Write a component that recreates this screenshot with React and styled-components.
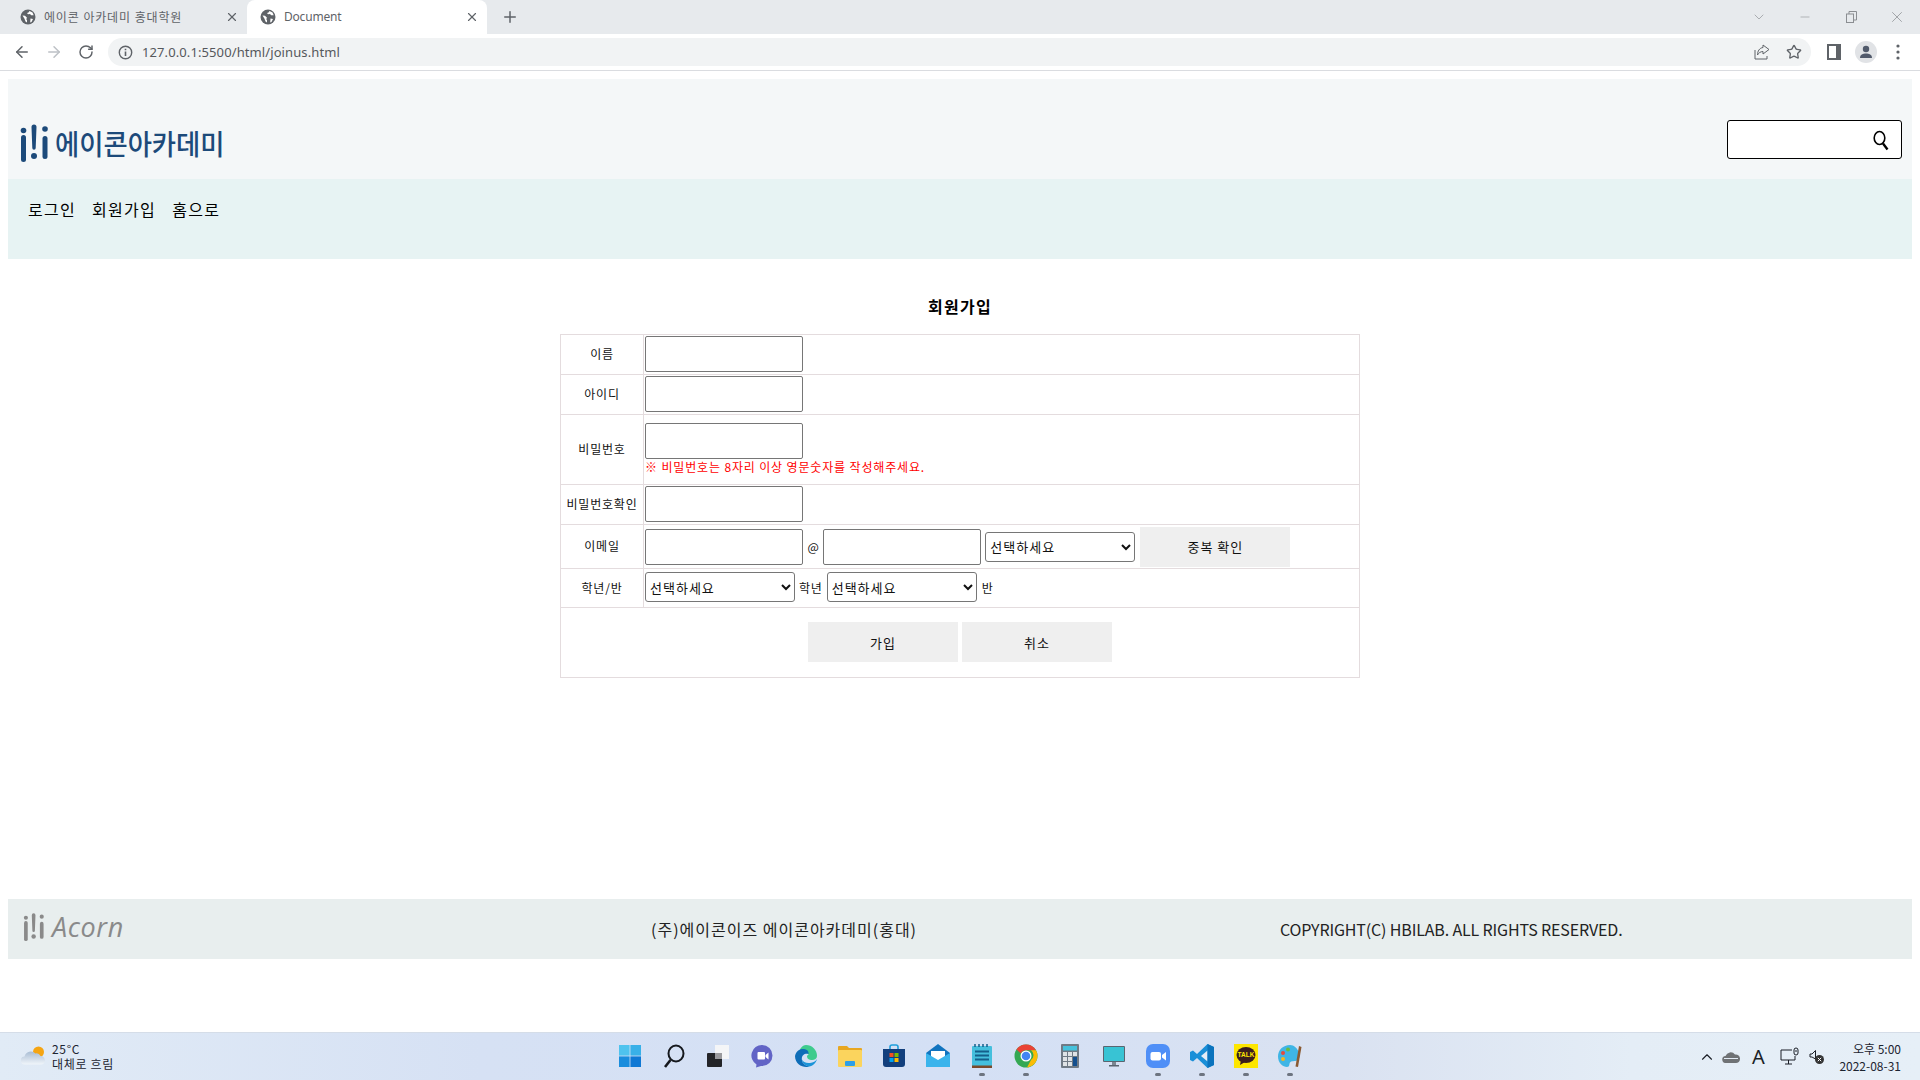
import React from 'react';
import styled, { createGlobalStyle } from 'styled-components';
import { ArrowLeft, ArrowRight, RotateCw, Star, X, Plus, ChevronDown, Minus, ChevronUp } from 'lucide-react';

const FONT = '"Noto Sans CJK KR", "Noto Sans", sans-serif';

const GlobalStyle = createGlobalStyle`
  html, body {
    margin: 0;
    padding: 0;
    height: 100%;
    background: #fff;
    overflow: hidden;
  }
  body {
    font-family: ${FONT};
    color: #000;
  }
`;

const Screen = styled.div`
  width: 1920px;
  height: 1080px;
  display: flex;
  flex-direction: column;
`;

/* browser chrome */
const TabStrip = styled.div`
  height: 34px;
  background: #e7eaed;
  display: flex;
  align-items: flex-end;
  padding-left: 7px;
`;

const Tab = styled.div`
  width: 240px;
  height: 34px;
  box-sizing: border-box;
  display: flex;
  align-items: center;
  gap: 8px;
  padding: 0 8px 1px 13px;
  background: ${(p) => (p.$active ? '#fff' : 'transparent')};
  border-radius: 8px 8px 0 0;
  font: 12px "Noto Sans", "Noto Sans CJK KR", sans-serif;
  color: #5f6368;
`;

const TabTitle = styled.span`
  flex: 1;
  white-space: nowrap;
  overflow: hidden;
  letter-spacing: ${(p) => (p.$ko ? '0.8px' : '-0.2px')};
`;

const NewTab = styled.div`
  margin-left: 14px;
  height: 34px;
  display: flex;
  align-items: center;
  color: #5f6368;
`;

const WindowControls = styled.div`
  margin-left: auto;
  display: flex;
  height: 34px;
`;

const WindowButton = styled.div`
  width: 46px;
  display: flex;
  align-items: center;
  justify-content: center;
  color: #8b8e92;
`;

const Toolbar = styled.div`
  height: 37px;
  box-sizing: border-box;
  background: #fff;
  border-bottom: 1px solid #dadce0;
  display: flex;
  align-items: center;
  padding: 0 6px;
`;

const ToolButton = styled.div`
  width: 32px;
  height: 28px;
  display: flex;
  align-items: center;
  justify-content: center;
  color: ${(p) => (p.$disabled ? '#bdc1c6' : '#5f6368')};
`;

const Omnibox = styled.div`
  flex: 1;
  height: 28px;
  margin: 0 7px 0 6px;
  border-radius: 14px;
  background: #f1f3f4;
  display: flex;
  align-items: center;
  padding: 0 1px 0 10px;
`;

const Url = styled.span`
  flex: 1;
  margin-left: 9px;
  font: 13px "Noto Sans", sans-serif;
  letter-spacing: 0.1px;
  color: #55585c;
`;

const OmniIcon = styled.div`
  width: 32px;
  display: flex;
  justify-content: center;
  color: #5f6368;
`;

/* page */
const Page = styled.div`
  flex: 1;
  min-height: 0;
  display: flex;
  flex-direction: column;
  padding: 8px 8px 73px;
`;

const Header = styled.header`
  height: 100px;
  box-sizing: border-box;
  background: #f4f7f8;
  display: flex;
  justify-content: space-between;
  padding: 41px 10px 0 12px;
`;

const Logo = styled.div`
  display: flex;
  align-items: center;
  gap: 6px;
  height: 38px;
  margin-top: 4px;
`;

const LogoText = styled.span`
  display: inline-block;
  font-size: 28px;
  font-weight: 500;
  line-height: 38px;
  color: #1c4a7a;
  transform: scaleX(0.94);
  transform-origin: left center;
  white-space: nowrap;
`;

const SearchBox = styled.div`
  width: 175px;
  height: 39px;
  box-sizing: border-box;
  border: 1px solid #000;
  border-radius: 3px;
  background: #fff;
  display: flex;
  align-items: center;
  padding: 2px 12px 0 0;
`;

const SearchInput = styled.input`
  flex: 1;
  min-width: 0;
  border: 0;
  outline: 0;
  background: transparent;
`;

const Nav = styled.nav`
  height: 80px;
  box-sizing: border-box;
  background: #e7f3f3;
  display: flex;
  align-items: flex-start;
  gap: 16px;
  padding: 19px 20px 0;
  font-size: 16px;
  line-height: 22px;
  letter-spacing: 1.3px;
`;

const Title = styled.h2`
  margin: 36px 0 16px;
  text-align: center;
  font-size: 16px;
  line-height: 23px;
  font-weight: 700;
  letter-spacing: 1.3px;
`;

const JoinTable = styled.table`
  width: 800px;
  margin: 0 auto;
  table-layout: fixed;
  border-collapse: collapse;
  font-size: 12px;
`;

const Row = styled.tr`
  height: ${(p) => p.$h}px;
`;

const Label = styled.td`
  width: 83px;
  box-sizing: border-box;
  padding: 0 0 2px;
  border: 1px solid #e4dcde;
  text-align: center;
  vertical-align: middle;
  letter-spacing: 0.8px;
  color: #111;
`;

const Field = styled.td`
  padding: 0 0 ${(p) => p.$pb ?? 2}px 1px;
  border: 1px solid #e4dcde;
  vertical-align: middle;
`;

const FieldStack = styled.div`
  display: flex;
  flex-direction: column;
  align-items: flex-start;
  padding-top: 1px;
`;

const FieldRow = styled.div`
  display: flex;
  align-items: center;
`;

const TextInput = styled.input`
  width: 158px;
  height: 36px;
  box-sizing: border-box;
  border: 1px solid #767676;
  border-radius: 2px;
  background: #fff;
  padding: 0 2px;
`;

const Note = styled.span`
  font-size: 12px;
  line-height: 16px;
  letter-spacing: 0.85px;
  color: #ff0000;
`;

const Between = styled.span`
  margin: 0 ${(p) => p.$gap || 4}px;
  font-size: 12px;
  letter-spacing: ${(p) => (p.$tight ? 0 : 0.8)}px;
  color: #111;
`;

const Picker = styled.select`
  width: 150px;
  height: 30px;
  box-sizing: border-box;
  margin-left: ${(p) => p.$ml || 0}px;
  border: 1px solid #767676;
  border-radius: 3px;
  background: #fff;
  font: 13px ${FONT};
  letter-spacing: 1px;
  color: #111;
`;

const GreyButton = styled.button`
  width: 150px;
  height: 40px;
  border: 0;
  padding: 0;
  margin-left: ${(p) => p.$ml || 0}px;
  background: #efefef;
  font: 13px ${FONT};
  letter-spacing: 1px;
  color: #111;
`;

const Actions = styled.td`
  padding: 0 0 1px;
  border: 1px solid #e4dcde;
  text-align: center;
`;

const ActionRow = styled.div`
  display: flex;
  justify-content: center;
  gap: 4px;
`;

/* footer */
const Footer = styled.footer`
  margin-top: auto;
  height: 60px;
  background: #e8eeee;
  display: grid;
  grid-template-columns: 643px 629px 1fr;
  align-items: center;
  font-size: 16px;
`;

const FootLogo = styled.div`
  display: flex;
  align-items: center;
  gap: 7px;
  padding: 0 0 5px 15px;
  color: #8a8a8a;
`;

const FootWord = styled.span`
  font: italic 27px "Open Sans", sans-serif;
  line-height: 32px;
  letter-spacing: 0.6px;
`;

const FootText = styled.span`
  color: #222;
  white-space: nowrap;
  line-height: 20px;
  letter-spacing: ${(p) => (p.$ko ? '1px' : '-0.15px')};
`;

/* taskbar */
const Taskbar = styled.div`
  height: 48px;
  box-sizing: border-box;
  border-top: 1px solid #d5dde8;
  background: linear-gradient(90deg, #e1ebf6 0%, #d6e1f4 25%, #d4e0f5 50%, #dae2f1 70%, #e4edf6 85%, #e6eff7 100%);
  display: grid;
  grid-template-columns: 1fr auto 1fr;
  align-items: center;
`;

const Weather = styled.div`
  display: flex;
  align-items: center;
  gap: 7px;
  padding: 0 0 2px 21px;
  font-size: 12px;
  line-height: 15px;
`;

const WeatherText = styled.div`
  letter-spacing: 0.7px;
  color: #1c2430;
`;

const AppRow = styled.div`
  display: flex;
`;

const AppSlot = styled.div`
  position: relative;
  width: 44px;
  height: 47px;
  box-sizing: border-box;
  padding-bottom: 2px;
  display: flex;
  align-items: center;
  justify-content: center;
`;

const RunDot = styled.span`
  position: absolute;
  left: 19px;
  bottom: 4px;
  width: 6px;
  height: 3px;
  border-radius: 2px;
  background: #6d7480;
`;

const Tray = styled.div`
  justify-self: end;
  display: flex;
  align-items: center;
  padding-right: 19px;
  color: #1b1f27;
`;

const TrayIcon = styled.div`
  width: ${(p) => p.$w}px;
  display: flex;
  justify-content: center;
`;

const TrayLetter = styled.span`
  font: 20px "Noto Sans", sans-serif;
  line-height: 24px;
`;

const Clock = styled.div`
  margin-left: 14px;
  text-align: right;
  font-size: 12px;
  line-height: 17px;
  color: #1c2430;
`;

const Favicon = () => (
  <svg width="16" height="16" viewBox="0 0 16 16">
    <circle cx="8" cy="8" r="7.5" fill="#5f6368" />
    <path d="M2.500 6.500l2.500.3 2 2-.8 1.400.8.8v2.500l-1.500-1-1-2.800zM9.500 2l-1 1.500-1.500.6 1 1.200 2-.4 1.200 1.300h2.500L12.500 3.500zM10.500 9.500l2.500.4-1.500 3-1.300.5z" fill="#fff" />
  </svg>
);

const LogoMark = ({ color, w, h }) => (
  <svg width={w} height={h} viewBox="0 0 29 38" fill={color}>
    <circle cx="3.5" cy="6.5" r="2.8" />
    <rect x="1" y="11" width="5" height="27" rx="2.5" />
    <path d="M11.5 3a2.5 2.5 0 0 1 5 0l-.8 21a1.7 1.7 0 0 1-3.4 0z" />
    <circle cx="14" cy="32" r="3" />
    <circle cx="25" cy="5" r="2.8" />
    <rect x="22.5" y="12" width="5" height="23" rx="2.5" />
  </svg>
);

const MagnifierIcon = () => (
  <svg width="16" height="21" viewBox="0 0 16 21" fill="none" stroke="#000">
    <ellipse cx="6.5" cy="8" rx="5.3" ry="6.5" strokeWidth="1.6" />
    <path d="M10 13.500l4.500 6" strokeWidth="2.4" />
  </svg>
);

const InfoIcon = () => (
  <svg width="15" height="15" viewBox="0 0 15 15" fill="none" stroke="#5f6368" strokeWidth="1.4">
    <circle cx="7.5" cy="7.5" r="6.2" />
    <path d="M7.500 6.500v4.500M7.500 3.800v1.500" strokeWidth="1.6" />
  </svg>
);

const ShareIcon = () => (
  <svg width="16" height="16" viewBox="0 0 16 16" fill="none" stroke="#5f6368" strokeWidth="1">
    <path d="M1 6v9h12v-3" />
    <path d="M9 1l6 4.500L9 10V7.500C6.500 7.500 4.500 9 3.500 11c0-4 2-7 5.500-7.500z" />
  </svg>
);

const PanelIcon = () => (
  <svg width="14" height="16" viewBox="0 0 14 16">
    <rect width="14" height="16" fill="#5f6368" />
    <rect x="2" y="2" width="7" height="12" fill="#fff" />
  </svg>
);

const AvatarIcon = () => (
  <svg width="22" height="22" viewBox="0 0 22 22">
    <circle cx="11" cy="11" r="11" fill="#e1e3e6" />
    <circle cx="11" cy="8" r="3.2" fill="#515a6b" />
    <path d="M5 17c0-3.500 3-4.500 6-4.500s6 1 6 4.500z" fill="#515a6b" />
  </svg>
);

const DotsIcon = () => (
  <svg width="4" height="16" viewBox="0 0 4 16" fill="#5f6368">
    <circle cx="2" cy="2" r="1.6" />
    <circle cx="2" cy="8" r="1.6" />
    <circle cx="2" cy="14" r="1.6" />
  </svg>
);

const RestoreIcon = () => (
  <svg width="11" height="12" viewBox="0 0 11 12" fill="none" stroke="#8b8e92">
    <rect x="0.5" y="3" width="7" height="8.5" />
    <path d="M3 3V.5h7.500V9H8" />
  </svg>
);

const WeatherIcon = () => (
  <svg width="24" height="20" viewBox="0 0 24 20">
    <defs>
      <linearGradient id="cloudFill" x1="0" y1="0" x2="0" y2="1">
        <stop offset="0" stopColor="#a9bdd4" />
        <stop offset="1" stopColor="#f0f5fa" />
      </linearGradient>
    </defs>
    <circle cx="17.500" cy="6" r="5.500" fill="#f5a513" />
    <path d="M4 18.500a4 4 0 0 1-.5-8 6.500 6.500 0 0 1 11-3A4.500 4.500 0 0 1 19.500 10c2.500 0 4.500 2 4.500 4.500s-2 4-4 4z" fill="url(#cloudFill)" />
  </svg>
);

const apps = [
  {
    name: 'start',
    art: (
      <g>
        <rect x="1" y="1" width="10.6" height="10.6" fill="#4fc3ee" />
        <rect x="12.4" y="1" width="10.6" height="10.6" fill="#39b0e8" />
        <rect x="1" y="12.4" width="10.6" height="10.6" fill="#1a8ddd" />
        <rect x="12.4" y="12.4" width="10.6" height="10.6" fill="#0f78d4" />
      </g>
    ),
  },
  {
    name: 'search',
    art: (
      <g fill="none" stroke="#15181d">
        <ellipse cx="14" cy="9.5" rx="7.5" ry="8" strokeWidth="2" />
        <path d="M8.500 16L3 23" strokeWidth="2.6" />
      </g>
    ),
  },
  {
    name: 'taskview',
    art: (
      <g>
        <rect x="9" y="1" width="14" height="14" fill="#f4f5f7" />
        <rect x="1" y="9" width="15" height="14" rx="1" fill="#232428" />
        <rect x="9" y="9" width="7" height="6" fill="#9a9a9e" />
      </g>
    ),
  },
  {
    name: 'chat',
    art: (
      <g>
        <path d="M12 1a10.500 10.500 0 0 1 0 21h-1l-5 1.500.5-3A10.500 10.500 0 0 1 12 1z" fill="#6264c6" />
        <rect x="7.5" y="8" width="7.5" height="7.5" rx="1" fill="#fff" />
        <path d="M15.500 11l3-2.500v7l-3-2.500z" fill="#fff" />
      </g>
    ),
  },
  {
    name: 'edge',
    art: (
      <g>
        <path d="M12 1a11 11 0 0 1 11 11c0 3-3 4.500-6 4-3-.5-4-2-4-3.500 0-1 1-1.500 1.500-2C13 7 8 6 4.500 9 5 6 8 1 12 1z" fill="#3ecb8e" />
        <path d="M1 12C2 7 6 4.500 10 5c3 .3 5 2 4.500 5C10 9 7 12 8 16.500c.5 2.500 3 5.500 7.500 6C10 24.500 1 21 1 12z" fill="#0e6db8" />
        <path d="M23 15c-1 4-4 7-8 7.500-3.500-.5-7-3-7-7 1 2.500 4 4 8 3.500 3-.3 6-2 7-4z" fill="#1c94d8" />
      </g>
    ),
  },
  {
    name: 'files',
    art: (
      <g>
        <path d="M0 3a1 1 0 0 1 1-1h8l2 2h12a1 1 0 0 1 1 1v3H0z" fill="#e8a721" />
        <rect y="6" width="24" height="17" rx="1" fill="#fbd45d" />
        <rect x="7" y="17" width="10" height="5" rx="1" fill="#2f9fe6" />
      </g>
    ),
  },
  {
    name: 'store',
    art: (
      <g>
        <path d="M8 5V3a2 2 0 0 1 2-2h4a2 2 0 0 1 2 2v2" fill="none" stroke="#1f9fdb" strokeWidth="1.6" />
        <path d="M1 5h22v15a3 3 0 0 1-3 3H4a3 3 0 0 1-3-3z" fill="#123f7d" />
        <rect x="7.5" y="9" width="4" height="4" fill="#f25022" />
        <rect x="12.5" y="9" width="4" height="4" fill="#7fba00" />
        <rect x="7.5" y="14" width="4" height="4" fill="#00a4ef" />
        <rect x="12.5" y="14" width="4" height="4" fill="#ffb900" />
      </g>
    ),
  },
  {
    name: 'mail',
    art: (
      <g>
        <path d="M12 0l12 9v14H0V9z" fill="#1174bf" />
        <path d="M5 7h14v7l-7 4-7-4z" fill="#fff" />
        <path d="M0 9l12 7 12-7v14H0z" fill="#3ab4ec" />
      </g>
    ),
  },
  {
    name: 'notepad',
    dot: true,
    art: (
      <g>
        <rect x="2" y="2" width="20" height="22" rx="1" fill="#45bfdd" />
        <rect x="2" y="21.5" width="20" height="2.5" fill="#7b4a2b" />
        <path d="M5 7.500h14M5 11.500h14M5 15.500h14" stroke="#155f8a" strokeWidth="1.8" />
        <path d="M5 0v3M9 0v3M13 0v3M17 0v3" stroke="#155f8a" strokeWidth="1.5" />
      </g>
    ),
  },
  {
    name: 'chrome',
    dot: true,
    art: (
      <g>
        <circle cx="12" cy="12" r="11.5" fill="#34a853" />
        <path d="M12 .5a11.500 11.500 0 0 1 10 5.800H12a5.800 5.800 0 0 0-5.200 3.200L2.500 5.500A11.500 11.500 0 0 1 12 .5z" fill="#ea4335" />
        <path d="M22 6.300a11.500 11.500 0 0 1-9 17.100l4-7.500a5.800 5.800 0 0 0 0-9.600z" fill="#fbbc04" />
        <circle cx="12" cy="12" r="5.5" fill="#fff" />
        <circle cx="12" cy="12" r="4.3" fill="#4285f4" />
      </g>
    ),
  },
  {
    name: 'calc',
    art: (
      <g>
        <rect x="3" y="0" width="18" height="24" rx="1" fill="#6f7a85" />
        <rect x="5" y="2" width="14" height="4.5" fill="#45c1dc" />
        <path d="M5 8h4v4H5zM10 8h4v4h-4zM15 8h4v4h-4zM5 13h4v4H5zM10 13h4v4h-4zM5 18h4v4H5zM10 18h4v4h-4z" fill="#dfe3e6" />
        <rect x="15" y="13" width="4" height="9" fill="#134f8e" />
      </g>
    ),
  },
  {
    name: 'display',
    art: (
      <g>
        <rect x="1" y="2" width="22" height="16" rx="1" fill="#5a6570" />
        <rect x="2" y="3" width="20" height="14" fill="#38c3d4" />
        <path d="M10 18h4v3h-4z" fill="#7c8791" />
        <rect x="7" y="21" width="10" height="1.5" fill="#5a6570" />
      </g>
    ),
  },
  {
    name: 'zoom',
    dot: true,
    art: (
      <g>
        <rect x="0" y="0" width="24" height="24" rx="7" fill="#4f8ff7" />
        <rect x="4.5" y="8" width="10.5" height="8.5" rx="2" fill="#fff" />
        <path d="M16 11l4-3v8.500l-4-3z" fill="#fff" />
      </g>
    ),
  },
  {
    name: 'vscode',
    dot: true,
    art: (
      <g>
        <path d="M17.500 0L24 3v18l-6.500 3L7 14l-4 3.500-3-1.500v-8l3-1.500L7 10z" fill="#1a8fd8" />
        <path d="M17.500 6.500L11 12l6.500 5.500z" fill="#e4ecf6" />
        <path d="M17.500 0L24 3v18l-6.500 3z" fill="#0b73bd" />
      </g>
    ),
  },
  {
    name: 'kakao',
    dot: true,
    art: (
      <g>
        <rect width="24" height="24" fill="#fde600" />
        <ellipse cx="12" cy="11" rx="9.5" ry="8" fill="#3a1d1d" />
        <path d="M7 16l-1 5 5-3z" fill="#3a1d1d" />
        <text x="12" y="13" textAnchor="middle" fontSize="6.5" fontWeight="700" fill="#fde600" fontFamily="Liberation Sans, sans-serif">TALK</text>
      </g>
    ),
  },
  {
    name: 'paint',
    dot: true,
    art: (
      <g>
        <path d="M12 1C5 1 0 6 0 12.500 0 19 5 23 9 23c3 0 2-3 3-4.500 1-2 5-1 7-2 3-2 3-5 2-8-1.500-4-5-7.500-9-7.500z" fill="#3fb5e5" />
        <circle cx="5" cy="9" r="2" fill="#e44b3c" />
        <circle cx="10" cy="5.5" r="2" fill="#6cbb3c" />
        <circle cx="5" cy="15" r="2" fill="#f3b61f" />
        <path d="M21 2l2.500 1-3.500 20-2.500-.5z" fill="#8a5a32" />
      </g>
    ),
  },
];

const OnedriveIcon = () => (
  <svg width="18" height="12" viewBox="0 0 18 12">
    <path d="M4 12a3.500 3.500 0 0 1-.5-7A5.500 5.500 0 0 1 13 3.500 4.300 4.300 0 0 1 18 8c0 2.500-2 4-4 4z" fill="#6f7275" />
    <path d="M2 7.500h14" stroke="#e2ebf5" strokeWidth="1" />
  </svg>
);

const NetworkIcon = () => (
  <svg width="20" height="19" viewBox="0 0 20 19" fill="none" stroke="#1b1f27" strokeWidth="1">
    <path d="M12 3H1v10h14V9" />
    <path d="M5 17h7M8.500 13v4" />
    <rect x="14" y="1" width="4" height="7" rx="2" />
    <path d="M16 3v2" />
  </svg>
);

const SpeakerIcon = () => (
  <svg width="15" height="15" viewBox="0 0 15 15" fill="none" stroke="#1b1f27" strokeWidth="1">
    <path d="M1 5h2l3.500-3.500V10L3 8H1z" />
    <circle cx="10.5" cy="10.5" r="4.5" fill="#333" stroke="none" />
    <path d="M8.800 8.800l3.400 3.400M12.200 8.800l-3.400 3.400" stroke="#fff" />
  </svg>
);

const BrowserChrome = () => (
  <>
    <TabStrip>
      <Tab>
        <Favicon />
        <TabTitle $ko>에이콘 아카데미 홍대학원</TabTitle>
        <X size={14} strokeWidth={2} />
      </Tab>
      <Tab $active>
        <Favicon />
        <TabTitle>Document</TabTitle>
        <X size={14} strokeWidth={2} />
      </Tab>
      <NewTab>
        <Plus size={18} strokeWidth={2} />
      </NewTab>
      <WindowControls>
        <WindowButton>
          <ChevronDown size={16} strokeWidth={1} />
        </WindowButton>
        <WindowButton>
          <Minus size={14} strokeWidth={1} />
        </WindowButton>
        <WindowButton>
          <RestoreIcon />
        </WindowButton>
        <WindowButton>
          <X size={18} strokeWidth={1} />
        </WindowButton>
      </WindowControls>
    </TabStrip>
    <Toolbar>
      <ToolButton>
        <ArrowLeft size={18} strokeWidth={2} />
      </ToolButton>
      <ToolButton $disabled>
        <ArrowRight size={18} strokeWidth={2} />
      </ToolButton>
      <ToolButton>
        <RotateCw size={16} strokeWidth={2.2} />
      </ToolButton>
      <Omnibox>
        <InfoIcon />
        <Url>127.0.0.1:5500/html/joinus.html</Url>
        <OmniIcon>
          <ShareIcon />
        </OmniIcon>
        <OmniIcon>
          <Star size={16} strokeWidth={2} />
        </OmniIcon>
      </Omnibox>
      <ToolButton>
        <PanelIcon />
      </ToolButton>
      <ToolButton>
        <AvatarIcon />
      </ToolButton>
      <ToolButton>
        <DotsIcon />
      </ToolButton>
    </Toolbar>
  </>
);

const JoinForm = () => (
  <JoinTable>
    <tbody>
      <Row $h={40}>
        <Label>이름</Label>
        <Field><FieldRow><TextInput /></FieldRow></Field>
      </Row>
      <Row $h={40}>
        <Label>아이디</Label>
        <Field><FieldRow><TextInput /></FieldRow></Field>
      </Row>
      <Row $h={70}>
        <Label>비밀번호</Label>
        <Field>
          <FieldStack>
            <TextInput />
            <Note>※ 비밀번호는 8자리 이상 영문숫자를 작성해주세요.</Note>
          </FieldStack>
        </Field>
      </Row>
      <Row $h={40}>
        <Label>비밀번호확인</Label>
        <Field><FieldRow><TextInput /></FieldRow></Field>
      </Row>
      <Row $h={44}>
        <Label>이메일</Label>
        <Field $pb={0}>
          <FieldRow>
            <TextInput />
            <Between $gap={4.5} $tight>@</Between>
            <TextInput />
            <Picker defaultValue="" $ml={4}>
              <option value="">선택하세요</option>
            </Picker>
            <GreyButton type="button" $ml={5}>중복 확인</GreyButton>
          </FieldRow>
        </Field>
      </Row>
      <Row $h={39}>
        <Label>학년/반</Label>
        <Field>
          <FieldRow>
            <Picker defaultValue=""><option value="">선택하세요</option></Picker>
            <Between>학년</Between>
            <Picker defaultValue=""><option value="">선택하세요</option></Picker>
            <Between $gap={5}>반</Between>
          </FieldRow>
        </Field>
      </Row>
      <Row $h={70}>
        <Actions colSpan={2}>
          <ActionRow>
            <GreyButton type="button">가입</GreyButton>
            <GreyButton type="button">취소</GreyButton>
          </ActionRow>
        </Actions>
      </Row>
    </tbody>
  </JoinTable>
);

const App = () => (
  <Screen>
    <GlobalStyle />
    <BrowserChrome />
    <Page>
      <Header>
        <Logo>
          <LogoMark color="#1c4a7a" w={29} h={38} />
          <LogoText>에이콘아카데미</LogoText>
        </Logo>
        <SearchBox>
          <SearchInput />
          <MagnifierIcon />
        </SearchBox>
      </Header>
      <Nav>
        <span>로그인</span>
        <span>회원가입</span>
        <span>홈으로</span>
      </Nav>
      <Title>회원가입</Title>
      <JoinForm />
      <Footer>
        <FootLogo>
          <LogoMark color="#8a8a8a" w={22} h={28} />
          <FootWord>Acorn</FootWord>
        </FootLogo>
        <FootText $ko>(주)에이콘이즈 에이콘아카데미(홍대)</FootText>
        <FootText>COPYRIGHT(C) HBILAB. ALL RIGHTS RESERVED.</FootText>
      </Footer>
    </Page>
    <Taskbar>
      <Weather>
        <WeatherIcon />
        <WeatherText>
          25°C
          <br />
          대체로 흐림
        </WeatherText>
      </Weather>
      <AppRow>
        {apps.map((app) => (
          <AppSlot key={app.name}>
            <svg width="24" height="24" viewBox="0 0 24 24">{app.art}</svg>
            {app.dot && <RunDot />}
          </AppSlot>
        ))}
      </AppRow>
      <Tray>
        <TrayIcon $w={24}><ChevronUp size={18} strokeWidth={1.5} /></TrayIcon>
        <TrayIcon $w={24}><OnedriveIcon /></TrayIcon>
        <TrayIcon $w={30}><TrayLetter>A</TrayLetter></TrayIcon>
        <TrayIcon $w={34}><NetworkIcon /></TrayIcon>
        <TrayIcon $w={18}><SpeakerIcon /></TrayIcon>
        <Clock>
          오후 5:00
          <br />
          2022-08-31
        </Clock>
      </Tray>
    </Taskbar>
  </Screen>
);

export default App;
